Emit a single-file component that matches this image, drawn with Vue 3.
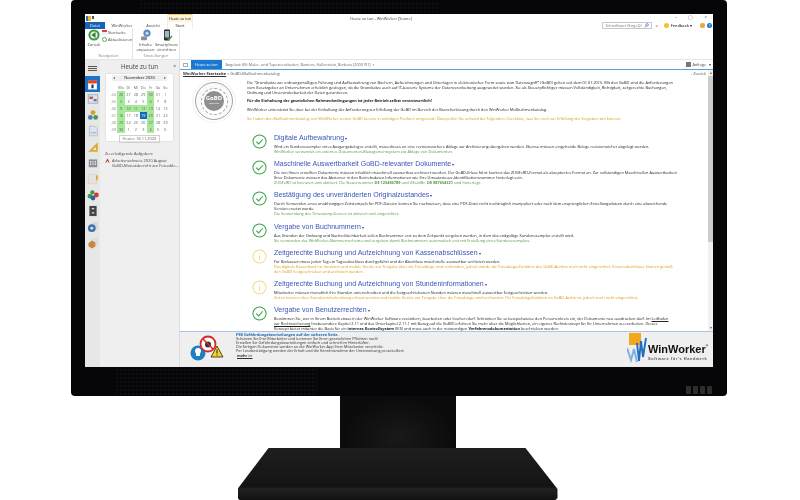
<script setup>
const ic = { ok: '#3fa34d', warn: '#f7d98a' }
const calRows = [
  ['44', '26', '27', '28', '29', '30', '31', '1'],
  ['45', '2', '3', '4', '5', '6', '7', '8'],
  ['46', '9', '10', '11', '12', '13', '14', '15'],
  ['47', '16', '17', '18', '19', '20', '21', '22'],
  ['48', '23', '24', '25', '26', '27', '28', '29'],
  ['49', '30', '1', '2', '3', '4', '5', '6'],
]
const greens = new Set(['0-1','0-5','1-1','1-5','2-1','2-2','2-3','2-4','2-5','3-1','3-5','4-1','4-5','5-1','5-5'])
const dayCls = (r, c) => {
  if (c === 0) return 'wk'
  if (r === 3 && c === 4) return 'today'
  return greens.has(r + '-' + c) ? 'green' : ''
}
const items = [
  { s: 'ok', h: 26, t: 'Digitale Aufbewahrung', d: ['Wird ein Kundenexemplar eines Ausgangsbeleges erstellt, muss dieses an eine revisionssichere Ablage zur Archivierung übergeben werden. Ebenso müssen eingehende Belege revisionssicher abgelegt werden.'], n: ['WinWorker verwendet ein externes Dokumenten-Managementsystem zur Ablage von Dokumenten.'] },
  { s: 'ok', h: 31, t: 'Maschinelle Auswertbarkeit GoBD-relevanter Dokumente', d: ['Die von Ihnen erstellten Dokumente müssen inhaltlich maschinell auswertbar archiviert werden. Der GoBD-Erlass führt konkret das ZUGFeRD-Format als akzeptiertes Format an. Zur vollständigen Maschinellen Auswertbarkeit', 'Ihrer Dokumente müssen das Absteiner in den Betriebsdaten Informationen wie Ihre Umsatzsteuer-Identifikationsnummer hinterlegt sein.'], n: ['ZUGFeRD ist lizenziert und aktiviert. Die Steuernummer <b>DE 123456789</b> und USt-IdNr. <b>DE 987654321</b> sind hinterlegt.'] },
  { s: 'ok', h: 32, t: 'Bestätigung des unveränderten Originalzustandes', d: ['Durch Verwenden eines unabhängigen Zeitstempels für PDF-Dateien können Sie nachweisen, dass eine PDF-Datei nicht nachträglich manipuliert oder nach dem ursprünglichen Erstellungsdatum durch eine abweichende', 'Version ersetzt wurde.'], n: ['Die Verwendung des Timestamp-Servers ist aktiviert und eingerichtet.'] },
  { s: 'ok', h: 26, t: 'Vergabe von Buchnummern', d: ['Aus Gründen der Ordnung und Nachvollziehbarkeit sollen Buchnummer erst zu dem Zeitpunkt vergeben werden, in dem das endgültige Kundenexemplar erstellt wird.'], n: ['Sie verwenden das WinWorker-Nummernschema und vergeben damit Buchnummern automatisch erst mit Erstellung eines Kundenexemplars.'] },
  { s: 'warn', h: 31, t: 'Zeitgerechte Buchung und Aufzeichnung von Kassenabschlüssen', d: ['Für Barkassen muss jeden Tag ein Tagesabschluss durchgeführt und der Abschluss maschinelle auswertbar archiviert werden.'], n: ['Das digitale Kassenbuch ist lizenziert und mobile Geräte zur Freigabe über die Fotoablage sind vorhanden, jedoch wurde die Fotoablage-Funktion des GoBD-Archivs noch nicht eingerichtet. Kassenabschlüsse können gemäß', 'den GoBD festgeschrieben und archiviert werden.'] },
  { s: 'warn', h: 26, t: 'Zeitgerechte Buchung und Aufzeichnung von Stundeninformationen', d: ['Mitarbeiter müssen monatlich ihre Stunden unterschreiben und die festgeschriebenen Stunden müssen maschinell auswertbar festgeschrieben werden.'], n: ['Zeiten können über Stundenmitschreibung erfasst werden und mobile Geräte zur Freigabe über die Fotoablage sind vorhanden. Die Fotoablagefunktion im GoBD-Archiv ist jedoch noch nicht eingerichtet.'] },
  { s: 'ok', h: 24, t: 'Vergabe von Benutzerrechten', d: ['Bestimmen Sie, wer in Ihrem Betrieb etwas in der WinWorker Software verändern, bearbeiten oder löschen darf. Schränken Sie so beispielsweise den Personenkreis ein, der Dokumente neu ausdrucken darf. Im <u>Leitfaden</u>', '<u>zur Rechtssicherung</u> (insbesondere Kapitel 2.11 und das Unterkapitel 2.11.1 mit Bezug auf die GoBD) erfahren Sie mehr über die Möglichkeiten, ein eigenes Rechtskonzept für Ihr Unternehmen zu erarbeiten. Dieses', 'Konzept bietet mitunter die Basis für ein <b>internes Kontrollsystem</b> (IKS) und muss auch in der notwendigen <b>Verfahrensdokumentation</b> beschrieben werden.'], n: [] },
]
</script>

<template>
  <div class="page">
    <div class="bezel">
      <div class="dots top"></div>
      <div class="dots chin"></div>
      <div class="screen">
        <div class="titlebar">
          <span class="qa"><i class="q1"></i><i class="q2"></i></span>
          <span class="wtitle">Heute zu tun - WinWorker [Sonne]</span>
          <span class="wbtns"><span>–</span><span>▢</span><span>×</span></span>
        </div>
        <div class="tabs">
          <span class="tab datei">Datei</span>
          <span class="tab">WinWorker</span>
          <span class="tab">Ansicht</span>
          <div class="ctx">
            <span class="ctxh">Heute zu tun</span>
            <span class="ctxt">Start</span>
          </div>
          <div class="search">
            <span class="sbox">Schnellstart (Strg+Q)<svg viewBox="0 0 8 8" class="mag"><circle cx="5" cy="3" r="2" fill="none" stroke="#3b78c4" stroke-width="1.2"/><path d="M3.5 4.5 1 7" stroke="#3b78c4" stroke-width="1.2"/></svg></span>
            <span class="fb lg">«</span><i class="smile"></i><b class="fb">Feedback ▾</b><i class="thumb"></i><i class="help">?</i>
          </div>
        </div>
        <div class="ribbon">
          <div class="rgroup">
            <div class="rbody tight">
              <div class="big first">
                <svg viewBox="0 0 12 12" class="bigi"><circle cx="6" cy="6" r="5.6" fill="#3f9a46"/><circle cx="6" cy="6" r="3.6" fill="#e9f5e6"/><path d="M7.500 3 3.500 6 7.500 9z" fill="#2d7a33"/></svg>
                <span>Zurück</span>
              </div>
              <div class="smalls">
                <span><i class="s-cal"></i>Startseite</span>
                <span><i class="s-ref"></i>Aktualisieren</span>
              </div>
            </div>
            <span class="rlabel">Navigation</span>
          </div>
          <div class="rgroup">
            <div class="rbody tight">
              <div class="big wide">
                <svg viewBox="0 0 12 12" class="bigi"><circle cx="7" cy="4.200" r="3.600" fill="#5b8ec6"/><circle cx="7" cy="4.200" r="1.500" fill="#cfe0f2"/><rect x="1" y="7.600" width="6" height="3.600" rx="1" fill="#8a8f98"/></svg>
                <span>Inhalte<br>anpassen</span>
              </div>
              <div class="big wide">
                <svg viewBox="0 0 12 12" class="bigi"><rect x="3" y=".5" width="6" height="11" rx="1" fill="#2c2c2c"/><rect x="3.800" y="2" width="4.400" height="6.500" fill="#9fb7c9"/><path d="M6 8.500 8 10.500 11 7" stroke="#3f9b45" stroke-width="1.400" fill="none"/></svg>
                <span>Smartphone<br>einrichten</span>
              </div>
            </div>
            <span class="rlabel">Einstellungen</span>
          </div>
        </div>
        <div class="work">
          <aside class="strip">
            <div class="burger"><i></i><i></i><i></i></div>
            <div class="cal-ic">
              <svg viewBox="0 0 10 10"><rect x="1" y="1" width="8" height="8.500" fill="#fff"/><rect x="1" y="1" width="8" height="3" fill="#d8472b"/><rect x="4" y="5" width="2" height="3.400" fill="#333"/></svg>
            </div>
            <svg viewBox="0 0 10 10" class="sic"><rect x="1" y="1.500" width="8" height="7" fill="#dfe3e8" stroke="#8aa0b8" stroke-width=".6"/><rect x="2" y="3" width="3" height="2" fill="#c05a4a"/><rect x="5.500" y="5" width="2.500" height="2" fill="#5a7fa8"/></svg>
            <svg viewBox="0 0 10 10" class="sic"><circle cx="5" cy="3" r="2" fill="#c9a22c"/><circle cx="2.800" cy="7" r="2" fill="#4d7fb8"/><circle cx="7.200" cy="7" r="2" fill="#4b9a4b"/></svg>
            <svg viewBox="0 0 10 10" class="sic"><path d="M2 1h4.500L8.500 3v6H2z" fill="#dfe4ea" stroke="#a7b2bf" stroke-width=".6"/><path d="M3 6.500h4.500" stroke="#9aa7b5" stroke-width=".8"/></svg>
            <svg viewBox="0 0 10 10" class="sic"><path d="M1 9 9 1v8z" fill="#d9ae2e"/><path d="M5 7.500 7.500 5v2.500z" fill="#efefef"/></svg>
            <svg viewBox="0 0 10 10" class="sic"><rect x="1.500" y="2" width="7" height="6.500" fill="#8a8f96"/><path d="M2.500 4h1M4.500 4h1M6.500 4h1M2.500 6h1M4.500 6h1M6.500 6h1" stroke="#fff" stroke-width="1"/></svg>
            <svg viewBox="0 0 10 10" class="sic"><rect x="1" y="1" width="7" height="8" fill="#e6e3dc" stroke="#cfcfcf" stroke-width=".5"/><rect x="7.500" y="2" width="1.500" height="4" fill="#e8a23a"/></svg>
            <svg viewBox="0 0 10 10" class="sic"><circle cx="4.500" cy="2.800" r="1.800" fill="#3f9a46"/><circle cx="2.500" cy="6" r="2" fill="#3f9a46"/><circle cx="7.800" cy="5" r="2" fill="#d8392b"/><circle cx="5" cy="7.500" r="2" fill="#2b62b0"/></svg>
            <svg viewBox="0 0 10 10" class="sic"><rect x="2" y=".8" width="6" height="8.400" fill="#444"/><path d="M4 3h2M4 6.500h2" stroke="#ddd" stroke-width="1"/></svg>
            <svg viewBox="0 0 10 10" class="sic"><rect x="4" y="1" width="5" height="6" fill="#d8d8d8"/><circle cx="4" cy="6" r="3.200" fill="#3f72a8"/><circle cx="4" cy="6" r="1.200" fill="#d5e2ee"/></svg>
            <svg viewBox="0 0 10 10" class="sic"><rect x="4" y="1" width="5" height="7" fill="#dcdcdc"/><path d="M1 5.500 4 3l3 1.500V8L4 9.500 1.500 8z" fill="#c9863f"/></svg>
          </aside>
          <aside class="panel">
            <div class="phead"><span>Heute zu tun</span><em>×</em></div>
            <div class="cal">
              <div class="calhead"><span>◂</span><b>November 2020</b><span>▸</span></div>
              <div class="grid">
                <span class="wk"></span>
                <span v-for="d in ['Mo','Di','Mi','Do','Fr','Sa','So']" :key="d" class="dow">{{ d }}</span>
                <template v-for="(row, r) in calRows" :key="r">
                  <span v-for="(v, c) in row" :key="c" :class="dayCls(r, c)">{{ v }}</span>
                </template>
              </div>
              <div class="calfoot"><span>Heute: 18.11.2020</span></div>
            </div>
            <div class="todo">
              <div class="todoh">Zu erledigende Aufgaben:</div>
              <div class="todoi"><svg viewBox="0 0 6 6" class="pdf"><path d="M3 .5 5.600 5.500H4.200L3 3 1.800 5.500H.4z" fill="#c8312a"/></svg><span>Arbeitsnachweis 2020 August<br>GoBD-Monatsbericht zur Fotoable...</span></div>
            </div>
          </aside>
          <main class="main">
            <div class="doctabs">
              <span class="pin"><i></i></span>
              <span class="dt on">Heute zu tun</span>
              <span class="dt">Angebot: BV: Maler- und Tapezierarbeiten, Bantern, Hallenstein, Barbara [2000191]&nbsp; ×</span>
              <span class="ref"><i></i>Anfrage&nbsp;&nbsp; ▾</span>
            </div>
            <div class="content">
              <div class="scrollarea">
                <div class="crumb"><span><b>WinWorker Startseite</b> » GoBD-Maßnahmenkatalog</span><span class="back">‹ Zurück</span></div>
                <div class="intro">
                  <div class="badge">
                    <div class="b-mid"><div class="b-in">GoBD<small>konform</small></div></div>
                  </div>
                  <div class="introt">
                    <p>Die "Grundsätze zur ordnungsmäßigen Führung und Aufbewahrung von Büchern, Aufzeichnungen und Unterlagen in elektronischer Form sowie zum Datenzugriff" (GoBD) gelten seit dem 01.01.2015. Mit den GoBD sind die Anforderungen</p>
                    <p>vom Gesetzgeber an Unternehmen erheblich gestiegen, da die Grundsätze auch auf IT-basierte Systeme der Datenverarbeitung ausgeweitet wurden. Sie als Steuerpflichtiger müssen Vollständigkeit, Richtigkeit, zeitgerechte Buchungen,</p>
                    <p>Ordnung und Unveränderbarkeit der Daten garantieren.</p>
                    <p class="strong">Für die Einhaltung der gesetzlichen Rahmenbedingungen ist jeder Betrieb selbst verantwortlich!</p>
                    <p class="gap">WinWorker unterstützt Sie aber bei der Einhaltung der Anforderung zur Erfüllung der GoBD im Bereich der Branchenlösung durch den WinWorker Maßnahmenkatalog.</p>
                    <p class="gap warnt">Sie haben den Maßnahmenkatalog von WinWorker zu den GoBD bereits in wichtigen Punkten umgesetzt. Überprüfen Sie anhand der folgenden Checkliste, was Sie noch zur Erfüllung der Vorgaben tun können.</p>
                  </div>
                </div>
                <div class="list">
                  <div v-for="it in items" :key="it.t" class="item" :style="{ height: it.h + 'px' }">
                    <svg viewBox="0 0 16 16" class="st">
                      <circle cx="8" cy="8" r="7" fill="none" :stroke="ic[it.s]" stroke-width="1.100"/>
                      <path v-if="it.s === 'ok'" d="M4.600 8.200 7 10.600 11.600 5.600" fill="none" stroke="#3fa34d" stroke-width="1.100"/>
                      <path v-else d="M8 4.200v1.200M8 7v4.800" fill="none" stroke="#f7d98a" stroke-width="1.100"/>
                    </svg>
                    <div class="itext">
                      <div class="ititle">{{ it.t }}<span class="car">▾</span></div>
                      <p v-for="(l, i) in it.d" :key="i" v-html="l"></p>
                      <p v-for="(l, i) in it.n" :key="'n' + i" :class="it.s === 'ok' ? 'goodt' : 'warnt'" v-html="l"></p>
                    </div>
                  </div>
                </div>
              </div>
              <div class="scrollbar"><span class="arr">▴</span><i></i><span class="arr down">▾</span></div>
            </div>
            <div class="promo">
              <svg viewBox="0 0 36 28" class="promoi">
                <circle cx="9" cy="19" r="7.500" fill="#1f7fc4"/>
                <path d="M9 14a3 3 0 0 1 3 3c0 1.500-1 2-1 3v2H7v-2c0-1-1-1.500-1-3a3 3 0 0 1 3-3z" fill="#fff"/>
                <circle cx="19" cy="10" r="7.500" fill="#fff" stroke="#d62828" stroke-width="1.800"/>
                <circle cx="19" cy="10.500" r="3" fill="#333"/>
                <path d="M14 5 24 15" stroke="#d62828" stroke-width="1.500"/>
                <path d="M28 12 34 23H22z" fill="#f5d327" stroke="#222" stroke-width=".8"/>
                <path d="M28 15.500v4M28 20.500v1" stroke="#222" stroke-width="1"/>
              </svg>
              <div class="ptext">
                <p class="ph">PSK Gefährdungsbeurteilungen auf der sicheren Seite.</p>
                <p>Schützen Sie Ihre Mitarbeiter und kommen Sie Ihren gesetzlichen Pflichten nach!</p>
                <p>Erstellen Sie Gefährdungsbeurteilungen einfach und schnell im Hinterlüfter.</p>
                <p>Die fertigen Dokumente werden an die WinWorker App Ihrer Mitarbeiter verschickt.</p>
                <p>Per Lesebestätigung werden der Erhalt und die Kenntnisnahme der Unterweisung protokolliert.</p>
                <p class="more">mehr &gt;&gt;</p>
              </div>
              <div class="logo">
                <svg viewBox="0 0 20 30" class="logoi">
                  <rect x="2" y="0" width="12" height="12" fill="#f2a81d"/>
                  <path d="M10 10 12 28 14 8 16 24 19 5" fill="none" stroke="#1f6fc0" stroke-width="1.900"/>
                  <path d="M0 15 4 27 7 16 10 29" fill="none" stroke="#7fb2de" stroke-width="2"/>
                </svg>
                <div class="logot"><div class="ww">WinWorker<sup>®</sup></div><div class="ws">Software für's Handwerk</div></div>
              </div>
            </div>
          </main>
        </div>
      </div>
      <div class="leds"><i></i><i></i><i></i><i></i></div>
    </div>
    <div class="neck"></div>
    <div class="base"></div>
  </div>
</template>

<style>
html, body { margin: 0; background: #fff; overflow: hidden; }
</style>

<style scoped>
* { box-sizing: border-box; }
p { margin: 0; }
.page { width: 800px; height: 500px; display: flex; flex-direction: column; align-items: center; font-family: "Open Sans", "Liberation Sans", sans-serif; background: #fff; overflow: hidden; }
.bezel { width: 656px; height: 396px; margin-left: -2px; padding: 14px 14px 29px; background: #060608; border-radius: 4px; position: relative; flex: none; }
.dots { position: absolute; background-image: radial-gradient(#1b1b1d .6px, transparent .8px); background-size: 4px 4px; }
.dots.top { left: 68px; top: 2px; width: 300px; height: 10px; }
.dots.chin { left: 44px; bottom: 1px; width: 202px; height: 27px; }
.screen { height: 353px; background: #fff; display: flex; flex-direction: column; overflow: hidden; color: #222; filter: blur(.25px); position: relative; }
.titlebar { height: 8px; display: flex; align-items: center; position: relative; font-size: 4px; color: #444; flex: none; }
.qa { display: flex; gap: 1px; padding-left: 1px; }
.q1 { width: 5px; height: 5px; background: linear-gradient(90deg, #2f6fc2 50%, #f0b429 50%); }
.q2 { width: 2px; height: 3px; background: #555; }
.wtitle { position: absolute; left: 265px; top: 2px; font-size: 3.900px; line-height: 5px; }
.wbtns { position: absolute; right: 6px; top: 0; display: flex; gap: 11px; color: #777; font-size: 5px; }
.tabs { height: 7px; display: flex; font-size: 4px; position: relative; flex: none; }
.tab { width: 26px; text-align: center; line-height: 7px; color: #444; white-space: nowrap; }
.tab.datei { width: 20px; background: #1762b5; color: #fff; margin-right: 4px; }
.tab + .tab { margin-right: 5px; }
.ctx { position: absolute; left: 82px; top: -8px; width: 26px; height: 15px; background: #fff; text-align: center; border-left: 1px solid #eee; border-right: 1px solid #eee; white-space: nowrap; font-size: 3.700px; }
.ctxh { display: block; height: 8px; line-height: 7px; background: #fdf6d8; border-top: 1px solid #f0cf6a; }
.ctxt { display: block; line-height: 7px; font-size: 4px; }
.search { margin-left: auto; display: flex; align-items: center; gap: 2px; padding-right: 1px; margin-top: -1px; }
.sbox { width: 50px; height: 7px; border: 1px solid #c8c8c8; line-height: 5px; color: #777; padding-left: 2px; position: relative; font-size: 3.800px; margin-right: 1px; white-space: nowrap; }
.mag { width: 5px; height: 5px; position: absolute; right: 2px; top: 0; }
.fb { font-size: 4px; font-weight: 600; color: #444; white-space: nowrap; }
.fb.lg { margin-right: 4px; }
.smile { width: 5px; height: 5px; border-radius: 50%; background: #f5c028; }
.thumb { width: 5px; height: 5px; background: #e8a93a; border-radius: 2px; margin-left: 6px; }
.help { width: 5px; height: 5px; border-radius: 50%; background: #1b74c5; font-size: 4px; line-height: 5px; text-align: center; color: #fff; font-style: normal; }
.ribbon { height: 31px; display: flex; border-bottom: 1px solid #e4e4e4; font-size: 4px; color: #444; flex: none; }
.rgroup { display: flex; flex-direction: column; border-right: 1px solid #e4e4e4; align-items: center; padding: 0; position: relative; }
.rgroup:first-child { width: 48px; }
.rgroup:nth-child(2) { width: 47px; }
.rbody { flex: 1; display: flex; }
.rgroup:first-child .rbody { align-self: flex-start; padding-left: 1px; }
.big { width: 20px; display: flex; flex-direction: column; align-items: center; text-align: center; line-height: 5px; gap: 1px; white-space: nowrap; }
.big.first { width: 16px; }
.big.wide { width: 21px; }
.bigi { width: 12px; height: 12px; flex: none; }
.smalls { display: flex; flex-direction: column; gap: 2px; padding-top: 1px; white-space: nowrap; }
.smalls span { display: flex; align-items: center; gap: 1px; line-height: 5px; }
.s-cal, .s-ref { width: 5px; height: 5px; display: block; }
.s-cal { background: linear-gradient(#d8472b 40%, #eee 40%); }
.s-ref { border: 1.500px solid #5aa85a; border-radius: 50%; }
.rlabel { color: #888; line-height: 5px; margin-bottom: 1px; }
.work { flex: 1; display: flex; min-height: 0; }
.strip { width: 15px; background: #e7e7e7; display: flex; flex-direction: column; align-items: center; flex: none; }
.burger { height: 16px; width: 100%; display: flex; flex-direction: column; gap: 1px; padding: 6px 3px 0; flex: none; }
.burger i { height: 1px; background: #555; }
.cal-ic { width: 100%; height: 16px; background: #1a73c9; display: flex; align-items: center; justify-content: center; margin-bottom: 1px; flex: none; }
.cal-ic svg { width: 11px; height: 11px; }
.sic { width: 12px; height: 12px; margin-bottom: 4px; flex: none; }
.panel { width: 80px; background: #efefef; border-right: 1px solid #dcdcdc; flex: none; font-size: 4px; padding: 0 5px; }
.phead { height: 13px; display: flex; align-items: center; justify-content: center; font-size: 6.200px; position: relative; color: #444; }
.phead em { position: absolute; right: -2px; top: 3px; font-style: normal; font-size: 5px; }
.cal { background: #fff; border: 1px solid #e4e4e4; border-radius: 2px; padding: 1px 4px 2px; color: #666; height: 69px; }
.calhead { display: flex; justify-content: space-between; background: #efefef; line-height: 6px; font-size: 4px; margin: 0 2px 3px; padding: 0 1px; }
.calhead b { font-weight: 600; color: #444; }
.grid { display: grid; grid-template-columns: repeat(8, 7.400px); grid-auto-rows: 7px; text-align: center; line-height: 7px; font-size: 3.800px; }
.grid .green { background: #a7e89b; }
.grid .today { background: #0f6cb8; color: #fff; }
.grid .wk { color: #888; }
.calfoot { text-align: center; margin-top: 2px; }
.calfoot span { border: 1px solid #d0d0d0; padding: 0 3px; line-height: 6px; display: inline-block; }
.todo { padding: 9px 0; color: #444; line-height: 5px; font-size: 4px; white-space: nowrap; }
.todoh { margin-bottom: 2px; }
.todoi { display: flex; gap: 2px; }
.pdf { width: 5px; height: 5px; flex: none; }
.main { flex: 1; min-width: 0; display: flex; flex-direction: column; }
.doctabs { height: 10px; display: flex; align-items: stretch; font-size: 3.750px; color: #666; border-bottom: 1px solid #5aa0dc; flex: none; white-space: nowrap; }
.pin { width: 11px; display: flex; align-items: center; justify-content: center; }
.pin i { width: 5px; height: 4px; border: 1px solid #aaa; }
.dt { padding: 0 4px; line-height: 9px; }
.dt.on { background: #1a78d0; color: #fff; padding: 0 4px; }
.ref { margin-left: auto; line-height: 9px; display: flex; align-items: center; gap: 1px; padding-right: 2px; color: #444; }
.ref i { width: 5px; height: 5px; background: #777; }
.content { flex: 1; min-height: 0; display: flex; }
.scrollarea { flex: 1; min-width: 0; overflow: hidden; font-size: 3.870px; line-height: 5px; white-space: nowrap; color: #222; }
.crumb { height: 8px; display: flex; justify-content: space-between; padding: 1px 2px 0 3px; line-height: 6px; font-size: 4px; color: #555; }
.crumb b { font-weight: 700; text-decoration: underline; color: #333; }
.back { font-size: 4px; }
.intro { display: flex; height: 54px; padding-top: 2px; }
.badge { margin: 2px 0 0 15px; width: 38px; height: 38px; border-radius: 50%; border: 1.500px solid #a3a3a3; background: #fafafa; display: flex; align-items: center; justify-content: center; flex: none; box-shadow: 0 0 0 2px #fff, 0 0 0 2.500px #e6e6e6; }
.b-mid { width: 27px; height: 27px; border-radius: 50%; border: 1px dashed #a5a5a5; background: #fff; display: flex; align-items: center; justify-content: center; }
.b-in { width: 20px; height: 20px; border-radius: 50%; background: #8f8f8f; color: #fff; font-size: 6px; font-weight: 700; text-align: center; line-height: 7px; padding-top: 4px; }
.b-in small { display: block; font-size: 2.500px; line-height: 3px; font-weight: 400; }
.introt { margin-left: 14px; }
.strong { font-weight: 700; margin-top: 3px; color: #222; }
.gap { margin-top: 4px; }
.warnt { color: #d89a13; }
.goodt { color: #4d9a3c; }
.list { display: flex; flex-direction: column; padding: 2px 0 0 72px; }
.item { display: flex; gap: 7px; position: relative; flex: none; }
.st { width: 15px; height: 15px; flex: none; }
.itext { min-width: 0; }
.ititle { font-family: "Liberation Sans", sans-serif; font-size: 7px; line-height: 8px; color: #3a55b8; margin-bottom: .5px; }
.car { font-size: 4px; margin-left: 1px; color: #2a3fa0; }
.itext b { font-weight: 700; }
.scrollbar { width: 5px; background: #f1f1f1; flex: none; display: flex; flex-direction: column; position: relative; }
.arr { height: 6px; font-size: 4px; line-height: 6px; text-align: center; color: #666; flex: none; }
.arr.down { margin-top: auto; }
.scrollbar i { display: block; height: 166px; background: #cdcdcd; flex: none; }
.promo { height: 36px; background: #efefef; border-top: 1px solid #a9c4e4; display: flex; position: relative; font-size: 3.800px; line-height: 4px; color: #333; flex: none; white-space: nowrap; }
.promoi { width: 36px; height: 28px; margin: 2px 0 0 9px; flex: none; }
.ptext { margin-left: 11px; padding-top: 1px; }
.ph { color: #1668b5; font-weight: 700; }
.more { font-weight: 700; margin: 1px 0 0 1px; text-decoration: underline; }
.logo { position: absolute; right: 0; top: 1px; display: flex; align-items: flex-start; gap: 1px; }
.logoi { width: 20px; height: 30px; }
.logot { padding-top: 11px; width: 65px; }
.ww { font-family: "Liberation Sans", sans-serif; font-weight: 700; font-size: 11px; line-height: 11px; color: #111; white-space: nowrap; }
.ww sup { font-size: 3px; vertical-align: top; line-height: 4px; }
.ws { font-family: "Liberation Sans", sans-serif; font-weight: 700; font-size: 3.900px; letter-spacing: .6px; color: #555; line-height: 5px; margin-top: 1px; white-space: nowrap; }
.leds { position: absolute; right: 15px; bottom: 2px; display: flex; gap: 2px; }
.leds i { width: 5px; height: 8px; background: #2e2e2e; border-radius: 1px; }
.neck { width: 116px; height: 52px; background: radial-gradient(ellipse at 50% 80%, #191919, #0b0b0b 70%); flex: none; margin-left: -4px; }
.base { width: 320px; height: 52px; flex: none; margin-left: -5px; background: linear-gradient(#1e1e1e, #141414 75%, #222 78%, #111); clip-path: polygon(31px 0, 288px 0, 320px 41px, 320px 50px, 318px 52px, 2px 52px, 0 50px, 0 41px); }
</style>
